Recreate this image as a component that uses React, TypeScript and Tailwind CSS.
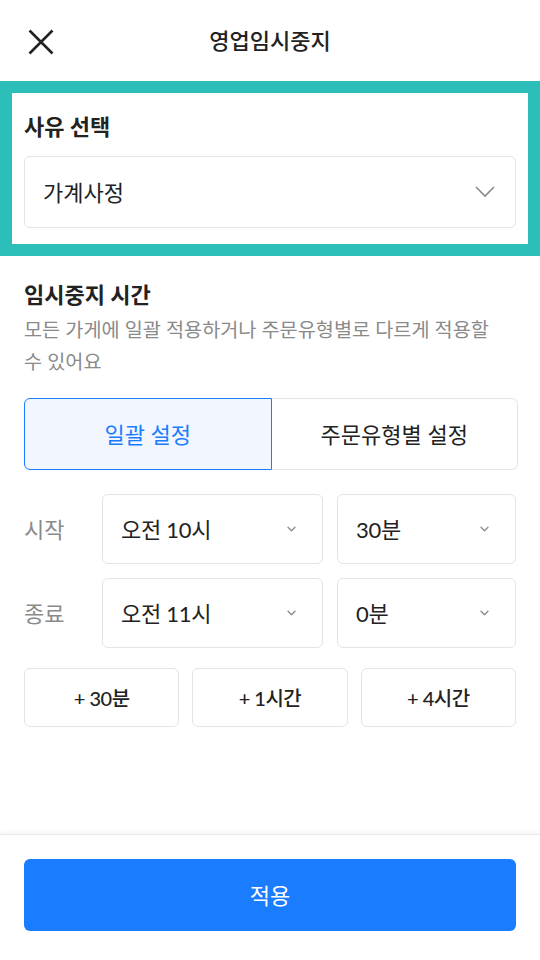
import React, { useState } from 'react';

// 시간 선택 박스
function TimeSelect({ value, wide }: { value: string; wide?: boolean }) {
  return (
    <div
      className={`${wide ? 'w-[221px]' : 'flex-1'} h-[70px] flex items-center justify-between pl-[18px] pr-[26px] border border-[#e4e4e4] rounded-[6px] bg-white`}
    >
      <span className="text-[22px] text-[#222] tracking-[-0.3px]">{value}</span>
      <svg width="9" height="6" viewBox="0 0 9 6" fill="none">
        <path d="M1 1.2l3.5 3.5 3.5-3.5" stroke="#8a8a8a" strokeWidth="1.3" strokeLinecap="round" strokeLinejoin="round" />
      </svg>
    </div>
  );
}

export default function App() {
  const [mode, setMode] = useState<'all' | 'type'>('all');

  return (
    <div
      className="w-[540px] h-[960px] flex flex-col bg-white text-[#222]"
      style={{ fontFamily: 'Lato, "Noto Sans CJK KR", sans-serif' }}
    >
      {/* 헤더 */}
      <div className="h-[81px] relative flex items-center justify-center shrink-0">
        <button className="absolute left-[28px] top-[29px]">
          <svg width="26" height="26" viewBox="0 0 26 26" fill="none">
            <path d="M1.5 1.5l23 23M24.5 1.5l-23 23" stroke="#222" strokeWidth="2.6" />
          </svg>
        </button>
        <h1 className="text-[22px] font-medium leading-none">영업임시중지</h1>
      </div>

      {/* 사유 선택 */}
      <div className="border-[12px] border-[#2cbfba] shrink-0">
        <div className="px-[12px] pt-[20px] pb-[16px]">
          <p className="text-[22px] leading-7 font-bold">사유 선택</p>
          <div className="mt-[15px] h-[72px] flex items-center justify-between pl-[18px] pr-[20px] border border-[#e4e4e4] rounded-[6px]">
            <span className="text-[22px]">가계사정</span>
            <svg width="20" height="12" viewBox="0 0 20 12" fill="none">
              <path d="M1 1l9 9 9-9" stroke="#8a8a8a" strokeWidth="1.6" />
            </svg>
          </div>
        </div>
      </div>

      {/* 임시중지 시간 */}
      <div className="flex-1 px-[24px] pt-[25px]">
        <p className="text-[22px] leading-7 font-bold">임시중지 시간</p>
        <p className="mt-[5px] text-[19.7px] leading-[32px] text-[#8a8a8a]">
          모든 가게에 일괄 적용하거나 주문유형별로 다르게 적용할
          <br />
          수 있어요
        </p>

        <div className="mt-[20px] flex h-[72px] w-[494px]">
          <button
            onClick={() => setMode('all')}
            className={`flex-1 rounded-l-[6px] border text-[22px] ${
              mode === 'all'
                ? 'bg-[#f2f6ff] border-[#1a7cff] text-[#1a7cff]'
                : 'border-[#e4e4e4] text-[#222]'
            }`}
          >
            일괄 설정
          </button>
          <button
            onClick={() => setMode('type')}
            className={`flex-1 rounded-r-[6px] border text-[22px] ${
              mode === 'type'
                ? 'bg-[#f2f6ff] border-[#1a7cff] text-[#1a7cff]'
                : 'border-[#e4e4e4] border-l-0 text-[#222]'
            }`}
          >
            주문유형별 설정
          </button>
        </div>

        <div className="mt-[24px] flex flex-col gap-[14px]">
          <div className="flex items-center">
            <span className="w-[78px] text-[22px] text-[#8a8a8a]">시작</span>
            <div className="flex-1 flex gap-[14px]">
              <TimeSelect value="오전 10시" wide />
              <TimeSelect value="30분" />
            </div>
          </div>
          <div className="flex items-center">
            <span className="w-[78px] text-[22px] text-[#8a8a8a]">종료</span>
            <div className="flex-1 flex gap-[14px]">
              <TimeSelect value="오전 11시" wide />
              <TimeSelect value="0분" />
            </div>
          </div>
        </div>

        <div className="mt-[20px] grid grid-cols-3 gap-[13px]">
          {['+ 30분', '+ 1시간', '+ 4시간'].map(t => (
            <button
              key={t}
              className="h-[59px] border border-[#e4e4e4] rounded-[6px] text-[20px] font-medium tracking-[-0.5px]"
            >
              {t}
            </button>
          ))}
        </div>
      </div>

      {/* 하단 버튼 */}
      <div className="shrink-0 border-t border-[#e8e8e8] shadow-[0_-2px_4px_rgba(0,0,0,0.05)] px-[24px] pt-[24px] pb-[29px]">
        <button className="w-full h-[72px] rounded-[6px] bg-[#1a7cff] text-white text-[22px]">적용</button>
      </div>
    </div>
  );
}
